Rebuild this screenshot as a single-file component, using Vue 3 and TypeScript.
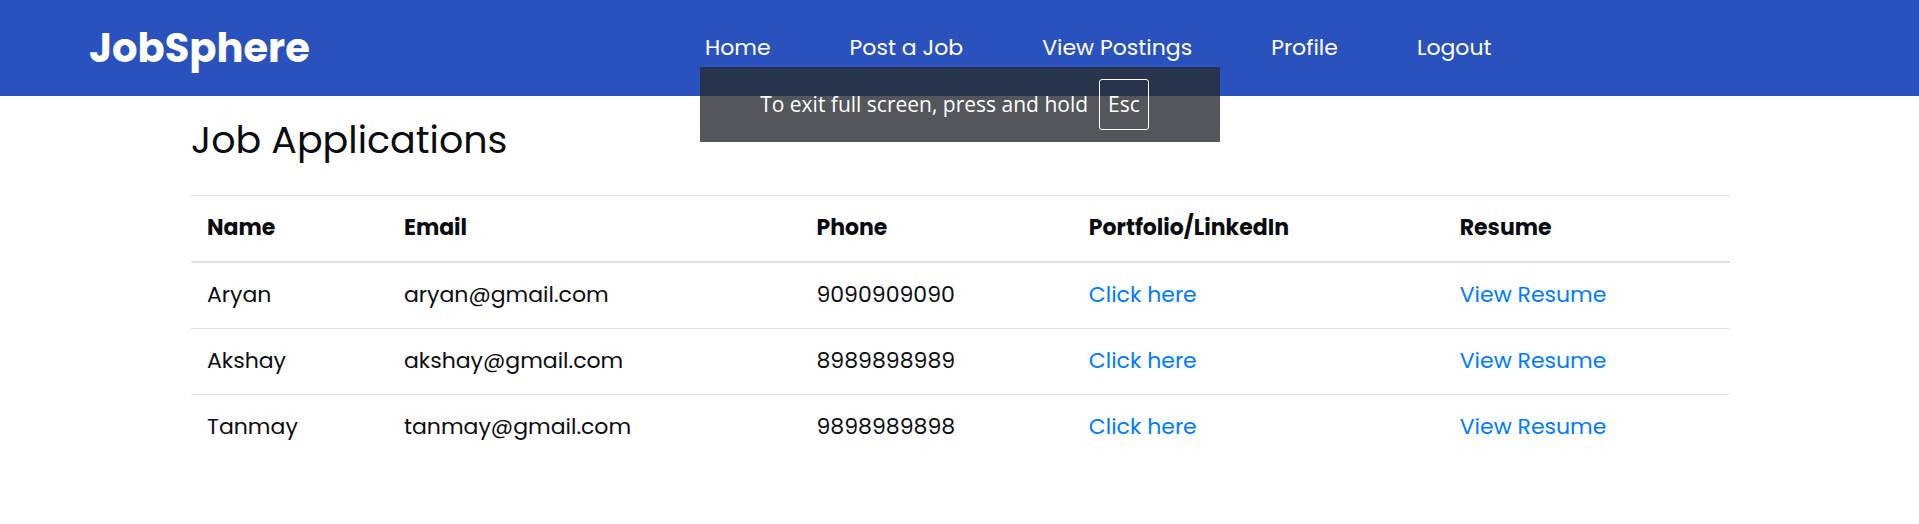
<script setup lang="ts">
interface Application {
  name: string
  email: string
  phone: string
}

const links: string[] = ['Home', 'Post a Job', 'View Postings', 'Profile', 'Logout']

const applications: Application[] = [
  { name: 'Aryan', email: 'aryan@gmail.com', phone: '9090909090' },
  { name: 'Akshay', email: 'akshay@gmail.com', phone: '8989898989' },
  { name: 'Tanmay', email: 'tanmay@gmail.com', phone: '9898989898' },
]
</script>

<template>
  <div class="page">
    <header class="navbar">
      <a class="brand" href="#">JobSphere</a>
      <nav class="links" aria-label="Main">
        <a v-for="link in links" :key="link" href="#">{{ link }}</a>
      </nav>
    </header>

    <main class="content">
      <h1>Job Applications</h1>
      <table>
        <colgroup>
          <col class="col-name" />
          <col class="col-email" />
          <col class="col-phone" />
          <col class="col-portfolio" />
          <col class="col-resume" />
        </colgroup>
        <thead>
          <tr>
            <th scope="col">Name</th>
            <th scope="col">Email</th>
            <th scope="col">Phone</th>
            <th scope="col">Portfolio/LinkedIn</th>
            <th scope="col">Resume</th>
          </tr>
        </thead>
        <tbody>
          <tr v-for="item in applications" :key="item.email">
            <td>{{ item.name }}</td>
            <td>{{ item.email }}</td>
            <td>{{ item.phone }}</td>
            <td><a href="#">Click here</a></td>
            <td><a href="#">View Resume</a></td>
          </tr>
        </tbody>
      </table>
    </main>

    <div class="hint" role="status">
      <span>To exit full screen, press and hold</span>
      <kbd>Esc</kbd>
    </div>
  </div>
</template>

<style>
body {
  margin: 0;
  background: #fff;
}
</style>

<style scoped>
.page {
  position: relative;
  font-family: Poppins, Inter, 'Liberation Sans', sans-serif;
  font-size: 22px;
  line-height: 32px;
  color: #0b0c10;
}

a {
  color: #007bff;
  text-decoration: none;
}

.navbar {
  display: flex;
  align-items: center;
  min-height: 96px;
  padding-left: 89px;
  background: #2a52be;
}

.navbar a {
  color: #fff;
  white-space: nowrap;
}

.brand {
  flex: 0 0 616px;
  font-size: 40px;
  font-weight: 700;
  line-height: 60px;
}

.links {
  display: flex;
  gap: 79px;
}

.content {
  padding: 20px 189px 0 191px;
}

h1 {
  margin: 0 0 31px;
  font-size: 38px;
  font-weight: 400;
  line-height: 48px;
}

table {
  width: 100%;
  table-layout: fixed;
  border-collapse: collapse;
}

.col-name {
  width: 12.8%;
}

.col-email {
  width: 26.8%;
}

.col-phone {
  width: 17.7%;
}

.col-portfolio {
  width: 24.1%;
}

.col-resume {
  width: 18.6%;
}

th,
td {
  padding: 16px 16px 17px;
  border-top: 1px solid #dee2e6;
  text-align: left;
}

th {
  font-weight: 700;
  border-bottom: 2px solid #dee2e6;
}

.hint {
  position: absolute;
  top: 67px;
  left: 50%;
  transform: translateX(-50%);
  display: flex;
  align-items: center;
  justify-content: center;
  gap: 11px;
  box-sizing: border-box;
  width: 520px;
  height: 75px;
  padding-right: 10px;
  background: rgba(40, 44, 50, 0.8);
  color: #fff;
  font-family: 'Open Sans', 'Noto Sans', sans-serif;
  font-size: 21px;
  line-height: 33px;
  white-space: nowrap;
}

kbd {
  box-sizing: border-box;
  padding: 8px;
  border: 1px solid #fff;
  border-radius: 3px;
  font-family: inherit;
}
</style>
